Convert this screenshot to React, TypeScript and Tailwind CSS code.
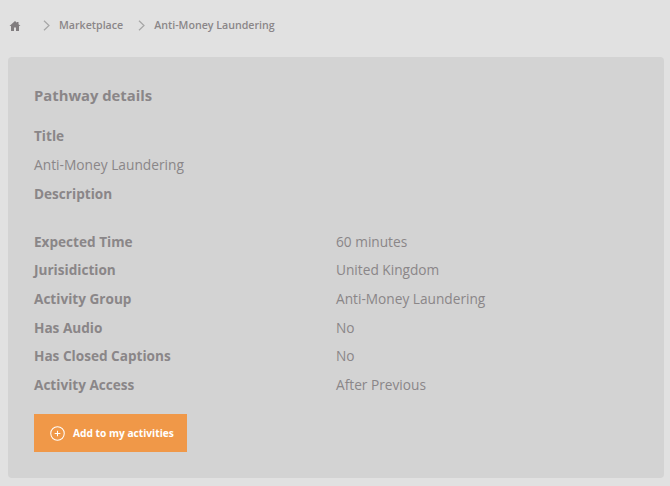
const details = [
  { label: 'Expected Time', value: '60 minutes' },
  { label: 'Jurisidiction', value: 'United Kingdom' },
  { label: 'Activity Group', value: 'Anti-Money Laundering' },
  { label: 'Has Audio', value: 'No' },
  { label: 'Has Closed Captions', value: 'No' },
  { label: 'Activity Access', value: 'After Previous' },
]

function Chevron() {
  return (
    <svg viewBox="0 0 7 11" className="h-[11px] w-[7px] fill-none stroke-[#a6a6a6]" strokeWidth="1.2">
      <path d="M1 .8 6 5.5 1 10.2" />
    </svg>
  )
}

export default function App() {
  return (
    <div className="h-[486px] w-[670px] overflow-hidden bg-[#e1e1e1] font-['Open_Sans',sans-serif] text-[#8a8688]">
      <nav className="flex h-[57px] items-center pb-[6px] pl-[9px] text-[10.65px] font-semibold">
        <svg viewBox="0 0 24 24" className="h-[12px] w-[12px] fill-[#817d7f]">
          <path d="M12 2 1 12h3v10h6v-7h4v7h6V12h3l-4-3.6V4h-3v1.7z" />
        </svg>
        <span className="ml-[22px]"><Chevron /></span>
        <span className="ml-[9px]">Marketplace</span>
        <span className="ml-[15px]"><Chevron /></span>
        <span className="ml-[9px]">Anti-Money Laundering</span>
      </nav>

      <section className="ml-[8px] h-[421px] w-[656px] rounded-[4px] bg-[#d3d3d3] px-[26px] pt-[28px]">
        <h2 className="text-[14.8px] leading-[20px] font-bold">Pathway details</h2>
        <p className="mt-[21px] text-[13.6px] leading-[20px] font-bold">Title</p>
        <p className="mt-[9px] text-[13.75px] leading-[20px]">Anti-Money Laundering</p>
        <p className="mt-[9px] text-[13.6px] leading-[20px] font-bold">Description</p>

        <div className="mt-[27.5px] flex flex-col gap-[8.7px]">
          {details.map((row) => (
            <div key={row.label} className="flex leading-[20px]">
              <span className="w-[302px] text-[13.6px] font-bold">{row.label}</span>
              <span className="text-[13.7px]">{row.value}</span>
            </div>
          ))}
        </div>

        <button className="mt-[19.5px] flex h-[38px] w-[153px] items-center bg-[#f09848] pl-[16px] text-[10.2px] font-bold text-white">
          <svg viewBox="0 0 16 16" className="h-[15px] w-[15px] fill-none stroke-white" strokeWidth="1.1">
            <circle cx="8" cy="8" r="7.2" />
            <path d="M8 5v6M5 8h6" />
          </svg>
          <span className="ml-[8px]">Add to my activities</span>
        </button>
      </section>
    </div>
  )
}
